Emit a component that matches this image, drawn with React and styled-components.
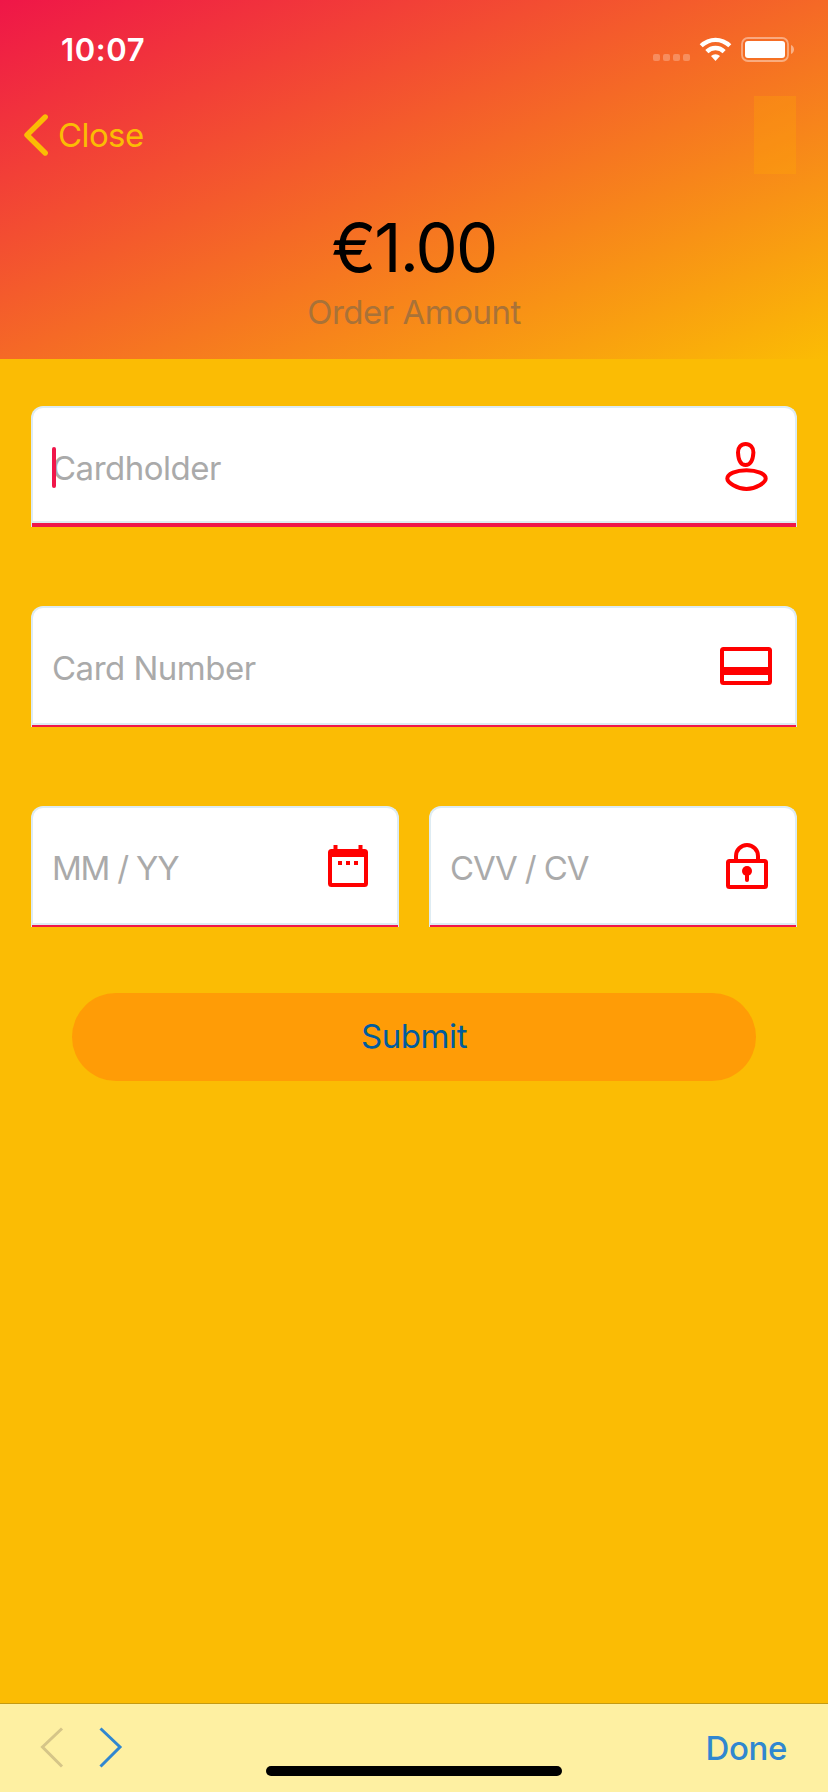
import React from 'react';
import styled, { createGlobalStyle } from 'styled-components';

const GlobalStyle = createGlobalStyle`
  *, *::after { box-sizing: border-box; }
  body { margin: 0; background: #fbbc04; font-family: Inter, "Liberation Sans", sans-serif; }
`;

const Screen = styled.main`
  display: flex;
  flex-direction: column;
  width: 828px;
  height: 1792px;
  background: #fbbc04;
  overflow: hidden;
`;

const Header = styled.header`
  height: 359px;
  flex: none;
  display: flex;
  flex-direction: column;
  background: linear-gradient(to bottom right, #ef1648, #fbbc04);
`;

const StatusBar = styled.div`
  height: 96px;
  padding: 29px 33px 0 61px;
  display: flex;
  justify-content: space-between;
  align-items: flex-start;
`;

const Label = styled.span`
  font-size: ${(p) => p.$size || 33}px;
  line-height: 42px;
  font-weight: ${(p) => p.$weight || 400};
  letter-spacing: ${(p) => p.$spacing || 0}px;
  color: ${(p) => p.$color};
  white-space: nowrap;
`;

const StatusIcons = styled.svg`
  width: 144px;
  height: 30px;
  margin-top: 6px;
`;

const NavBar = styled.nav`
  height: 78px;
  padding: 0 32px 0 22px;
  display: flex;
  justify-content: space-between;
`;

const BackButton = styled.button`
  display: flex;
  align-items: center;
  gap: 8px;
  padding: 0;
  border: 0;
  background: none;
  font-family: inherit;
`;

const BackIcon = styled.svg`
  width: 28px;
  height: 42px;
`;

const NavPatch = styled.div`
  width: 42px;
  background: rgba(255, 174, 0, 0.25);
`;

const Amount = styled.div`
  display: flex;
  flex-direction: column;
  align-items: center;
  padding-top: 34px;
`;

const AmountValue = styled.div`
  font-size: 67px;
  line-height: 80px;
  letter-spacing: -1.8px;
  color: #000;
  filter: blur(0.6px);
`;

const AmountCaption = styled(Label)`
  margin-top: 3px;
`;

const Form = styled.form`
  flex: 1;
  padding: 47px 31px 0;
  display: flex;
  flex-direction: column;
  gap: 79px;
`;

const FieldRow = styled.div`
  display: grid;
  grid-template-columns: 1fr 1fr;
  gap: 30px;
`;

const Field = styled.div`
  position: relative;
  height: 121px;
  padding: 0 19px 3px 19px;
  display: flex;
  align-items: center;
  justify-content: space-between;
  border: 2px solid #deecf3;
  border-bottom: 0;
  border-radius: 12px 12px 0 0;
  background: #fff;

  &::after {
    content: '';
    position: absolute;
    left: -1px;
    right: -1px;
    bottom: 0;
    height: ${(p) => (p.$focused ? 6 : 4)}px;
    border-top: 2px solid #deecf3;
    background: #f0164a;
  }
`;

const Placeholder = styled(Label).attrs({ $color: '#aaaaaa' })`
  padding-top: 4px;
`;

const Caret = styled.i`
  position: absolute;
  left: 19px;
  top: 39px;
  width: 4px;
  height: 41px;
  border-radius: 2px;
  background: #f0164a;
`;

const FieldIcon = styled.svg`
  width: 60px;
  height: 60px;
  flex: none;
  fill: none;
  stroke: #f00;
  stroke-width: 4;
`;

const SubmitButton = styled.button`
  height: 88px;
  margin: -13px 41px 0;
  padding: 0 0 2px;
  border: 0;
  border-radius: 44px;
  background: #ff9c06;
  font-family: inherit;
`;

const Toolbar = styled.footer`
  position: relative;
  flex: none;
  height: 89px;
  padding: 22px 41px 0 39px;
  display: flex;
  justify-content: space-between;
  align-items: flex-start;
  border-top: 1px solid #c49a12;
  background: #fef0a2;
`;

const DoneLabel = styled(Label)`
  padding-top: 1px;
`;

const Arrows = styled.svg`
  width: 84px;
  height: 42px;
  fill: none;
  stroke-width: 3;
`;

const HomeIndicator = styled.div`
  position: absolute;
  left: 266px;
  bottom: 16px;
  width: 296px;
  height: 10px;
  border-radius: 5px;
  background: #000;
`;

function PersonIcon() {
  return (
    <FieldIcon viewBox="0 0 60 60">
      <path d="M29.6 8C25 8 21.8 11.6 22 16.5C22.3 23.5 24.2 29 29.6 29S37 23.5 37.4 16.5C37.6 11.6 34.2 8 29.6 8Z" />
      <path d="M30.5 34.2C20 34.2 11.3 38 11.3 42.5C11.3 46.5 21 53 30.5 53S49.7 46.5 49.7 42.5C49.7 38 41 34.2 30.5 34.2Z" />
    </FieldIcon>
  );
}

const CardStripe = styled.path`
  stroke-width: 8;
`;

function CardIcon() {
  return (
    <FieldIcon viewBox="0 0 60 60">
      <rect x="6" y="13" width="48" height="34" rx="1.5" />
      <CardStripe d="M6 35H54" />
    </FieldIcon>
  );
}

function CalendarIcon() {
  return (
    <FieldIcon viewBox="0 0 60 60">
      <rect x="12" y="15" width="36" height="34" rx="1.5" />
      <path d="M12 19H48M17.500 9V15M42.500 9V15" />
      <path d="M20 27H24M28 27H32M36 27H40" />
    </FieldIcon>
  );
}

function LockIcon() {
  return (
    <FieldIcon viewBox="0 0 60 60">
      <rect x="12" y="25" width="38" height="26" rx="1.5" />
      <path d="M20 25V20A11 11 0 0 1 42 20V25" />
      <circle cx="31" cy="35" r="5" fill="#f00" stroke="none" />
      <path d="M31 36V44" strokeLinecap="round" />
    </FieldIcon>
  );
}

export default function App() {
  return (
    <Screen>
      <GlobalStyle />
      <Header>
        <StatusBar>
          <Label $size={31} $weight={600} $color="#fff" $spacing={0.6}>10:07</Label>
          <StatusIcons viewBox="651 35 144 30" fill="#fff">
            <g opacity="0.25">
              <rect x="653" y="54" width="7" height="7" rx="2" />
              <rect x="663" y="54" width="7" height="7" rx="2" />
              <rect x="673" y="54" width="7" height="7" rx="2" />
              <rect x="683" y="54" width="7" height="7" rx="2" />
            </g>
            <path d="M699.7 44.2A22.5 22.5 0 0 1 731.3 44.2L728.3 47.3A18.2 18.2 0 0 0 702.7 47.3Z" />
            <path d="M705.3 50A14.4 14.4 0 0 1 725.7 50L722.6 53.2A10 10 0 0 0 708.4 53.2Z" />
            <path d="M711 56A6.4 6.4 0 0 1 720 56L715.5 61Z" />
            <rect x="742" y="38" width="46" height="23" rx="6" fill="none" stroke="#fff" strokeWidth="1.8" opacity="0.42" />
            <rect x="745" y="41" width="40" height="17" rx="3" />
            <path d="M791 45C793.2 46 794 47.6 794 49.5S793.2 53 791 54Z" opacity="0.45" />
          </StatusIcons>
        </StatusBar>
        <NavBar>
          <BackButton>
            <BackIcon viewBox="0 0 28 42" fill="none" stroke="#fbbc04" strokeWidth="5.4" strokeLinecap="round" strokeLinejoin="round">
              <path d="M23.2 3L5 21L23.2 39" />
            </BackIcon>
            <Label $color="#fbbc04" $spacing={-0.6}>Close</Label>
          </BackButton>
          <NavPatch />
        </NavBar>
        <Amount>
          <AmountValue>€1.00</AmountValue>
          <AmountCaption $color="#a97238" $spacing={-0.5}>Order Amount</AmountCaption>
        </Amount>
      </Header>
      <Form>
        <Field $focused>
          <Placeholder $spacing={-0.5}>Cardholder</Placeholder>
          <Caret />
          <PersonIcon />
        </Field>
        <Field>
          <Placeholder $spacing={-0.5}>Card Number</Placeholder>
          <CardIcon />
        </Field>
        <FieldRow>
          <Field>
            <Placeholder $spacing={-1.2}>MM / YY</Placeholder>
            <CalendarIcon />
          </Field>
          <Field>
            <Placeholder $spacing={-1.15}>CVV / CV</Placeholder>
            <LockIcon />
          </Field>
        </FieldRow>
        <SubmitButton type="button">
          <Label $color="#005c9e" $spacing={-0.4}>Submit</Label>
        </SubmitButton>
      </Form>
      <Toolbar>
        <Arrows viewBox="0 0 84 42">
          <path d="M23 2.500L3.500 21L23 40.500" stroke="#d5c588" />
          <path d="M61.500 2.500L81 21L61.500 40.500" stroke="#3087d0" />
        </Arrows>
        <DoneLabel $weight={550} $color="#3087d0" $spacing={-0.4}>Done</DoneLabel>
        <HomeIndicator />
      </Toolbar>
    </Screen>
  );
}
